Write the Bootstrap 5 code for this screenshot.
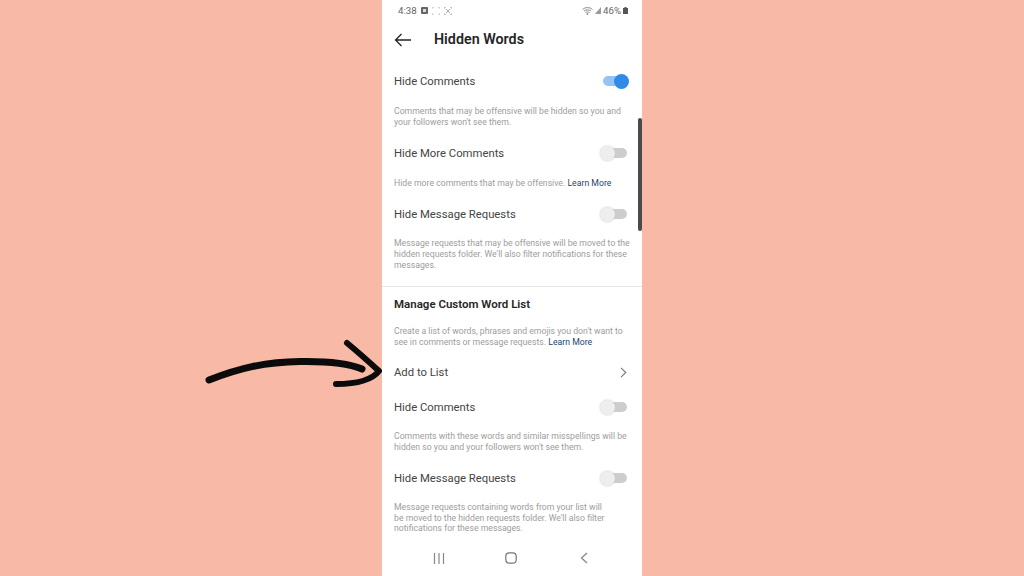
<!DOCTYPE html>
<html lang="en"><head><meta charset="utf-8"><title>Hidden Words</title>
<link href="https://cdn.jsdelivr.net/npm/bootstrap@5.3.0/dist/css/bootstrap.min.css" rel="stylesheet">
<style>
html,body{height:576px;overflow:hidden}
body{background:#f9b9a7;font-family:Roboto,"Liberation Sans",sans-serif;position:relative}
.phone{width:260px;height:576px;margin-left:382px;background:#fff;color:#262626;position:relative;overflow:hidden}
.stat{height:22px;padding:0 14px 0 16px;font-size:9.7px;color:#666}
.head{height:35px;padding-left:12px;gap:22px}
.head b{font-size:14.3px;font-weight:600;color:#262626}
.row-h{padding:0 15px 0 12px;font-size:11.3px;color:#444}
.dsc{padding:0 11px 0 12px;font-size:8.7px;line-height:10.7px;color:#9d9d9d;white-space:nowrap}
.dsc a{color:#23456f;text-decoration:none}
.sw{width:27px;height:16px;position:relative;flex:none;margin-bottom:2px}
.sw::before{content:"";position:absolute;left:3px;right:0;top:3px;height:10px;border-radius:5px;background:#cdcdcd}
.sw::after{content:"";position:absolute;left:0;top:.5px;width:15px;height:15px;border-radius:50%;background:#eeeeee;box-shadow:0 0 2px #c4c4c4}
.sw.on::before{background:#93c4f4}
.sw.on::after{left:14px;background:#2f8ae8;box-shadow:none}
.sepr{border-top:1px solid #e6e6e6}
.bnav{height:36px;position:absolute;left:0;right:0;bottom:0;background:#fff;justify-content:space-between;padding:0 54px 0 51px}
.sbar{position:absolute;left:256px;top:118px;width:3.5px;height:113px;background:#4a4a4a;border-radius:2px}
.arrow{position:absolute;left:200px;top:335px}
.hsm{height:33.5px}.h36{height:36px}.h40{height:40px}.h42{height:42px}
.gap-home{margin-right:3px}
.chev{margin-bottom:1px}
</style></head><body>
<div class="phone">
 <div class="stat d-flex align-items-center justify-content-between">
  <div class="d-flex align-items-center gap-1"><span>4:38</span>
   <svg width="7" height="7" viewBox="0 0 7 7"><rect width="7" height="7" rx="1" fill="#666"/><rect x="2" y="2" width="3" height="3" fill="#ddd"/></svg>
   <svg width="8" height="8" viewBox="0 0 8 8" fill="none" stroke="#bbb"><path d="M0 2V0H2M6 0H8V2M8 6V8H6M2 8H0V6"/></svg>
   <svg width="8" height="8" viewBox="0 0 8 8" fill="none" stroke="#aaa"><path d="M0 2V0H2M6 0H8V2M8 6V8H6M2 8H0V6M2 2L6 6M6 2L2 6"/></svg>
  </div>
  <div class="d-flex align-items-center" style="gap:2px">
   <svg width="11" height="8" viewBox="0 0 11 8" fill="none" stroke="#888"><path d="M.5 2.500C3 0 8 0 10.500 2.500M2 4C4 2.500 7 2.500 9 4M3.500 5.500C4.500 4.800 6.500 4.800 7.500 5.500"/><circle cx="5.500" cy="7" r=".6" fill="#888"/></svg>
   <svg width="6" height="7" viewBox="0 0 6 7"><path d="M6 0V7H0Z" fill="#999"/></svg>
   <span>46%</span>
   <svg width="5" height="7" viewBox="0 0 5 7"><path d="M1.500 0H3.500V1H5V7H0V1H1.500Z" fill="#555"/></svg>
  </div>
 </div>
 <div class="head d-flex align-items-center">
  <svg width="18" height="14" viewBox="0 0 18 14" fill="none" stroke="#222" stroke-width="1.300"><path d="M17 7H1.500M7.500 1L1.500 7L7.500 13"/></svg>
  <b>Hidden Words</b>
 </div>
 <div class="row-h h42 d-flex align-items-center justify-content-between" style="margin-top:4px"><span>Hide Comments</span><span class="sw on"></span></div>
 <div class="dsc" style="padding-top:3px">Comments that may be offensive will be hidden so you and<br>your followers won't see them.</div>
 <div class="row-h h40 d-flex align-items-center justify-content-between" style="margin-top:7px"><span>Hide More Comments</span><span class="sw"></span></div>
 <div class="dsc" style="padding-top:4px">Hide more comments that may be offensive. <a href="#">Learn More</a></div>
 <div class="row-h h40 d-flex align-items-center justify-content-between" style="margin-top:6px"><span>Hide Message Requests</span><span class="sw"></span></div>
 <div class="dsc" style="padding-top:3px">Message requests that may be offensive will be moved to the<br>hidden requests folder. We'll also filter notifications for these<br>messages.</div>
 <div class="sepr" style="margin-top:16px"></div>
 <div class="row-h d-flex align-items-center fw-semibold" style="height:34px;color:#262626;font-size:11.5px">Manage Custom Word List</div>
 <div class="dsc" style="padding-top:5px">Create a list of words, phrases and emojis you don't want to<br>see in comments or message requests. <a href="#">Learn More</a></div>
 <div class="row-h hsm d-flex align-items-center justify-content-between" style="margin-top:9px"><span>Add to List</span>
  <svg class="chev" width="7" height="11" viewBox="0 0 7 11" fill="none" stroke="#777" stroke-width="1.100"><path d="M1 .8L5.800 5.500L1 10.200"/></svg></div>
 <div class="row-h h36 d-flex align-items-center justify-content-between"><span>Hide Comments</span><span class="sw"></span></div>
 <div class="dsc" style="padding-top:5px">Comments with these words and similar misspellings will be<br>hidden so you and your followers won't see them.</div>
 <div class="row-h h40 d-flex align-items-center justify-content-between" style="margin-top:6.500px"><span>Hide Message Requests</span><span class="sw"></span></div>
 <div class="dsc" style="padding-top:3px">Message requests containing words from your list will<br>be moved to the hidden requests folder. We'll also filter<br>notifications for these messages.</div>
 <div class="bnav d-flex align-items-center">
  <svg width="12" height="11" viewBox="0 0 12 11" stroke="#888" stroke-width="1.200"><path d="M1.500 0V11M6 0V11M10.500 0V11"/></svg>
  <svg class="gap-home" width="12" height="12" viewBox="0 0 12 12" fill="none" stroke="#777" stroke-width="1.200"><rect x=".8" y=".8" width="10.400" height="10.400" rx="3.500"/></svg>
  <svg width="8" height="12" viewBox="0 0 8 12" fill="none" stroke="#888" stroke-width="1.300"><path d="M7 1L1.500 6L7 11"/></svg>
 </div>
 <div class="sbar"></div>
</div>
<svg class="arrow" width="190" height="60" viewBox="200 335 190 60" fill="none" stroke="#0b0b0b" stroke-linecap="round" stroke-linejoin="round"><path d="M209 380C240 368 265 362 300 361.500C330 361 350 364 362 369" stroke-width="7"/><path d="M347 343C358 352 368 361 379 371C372 380 355 384 336 384" stroke-width="6"/></svg>
</body></html>
